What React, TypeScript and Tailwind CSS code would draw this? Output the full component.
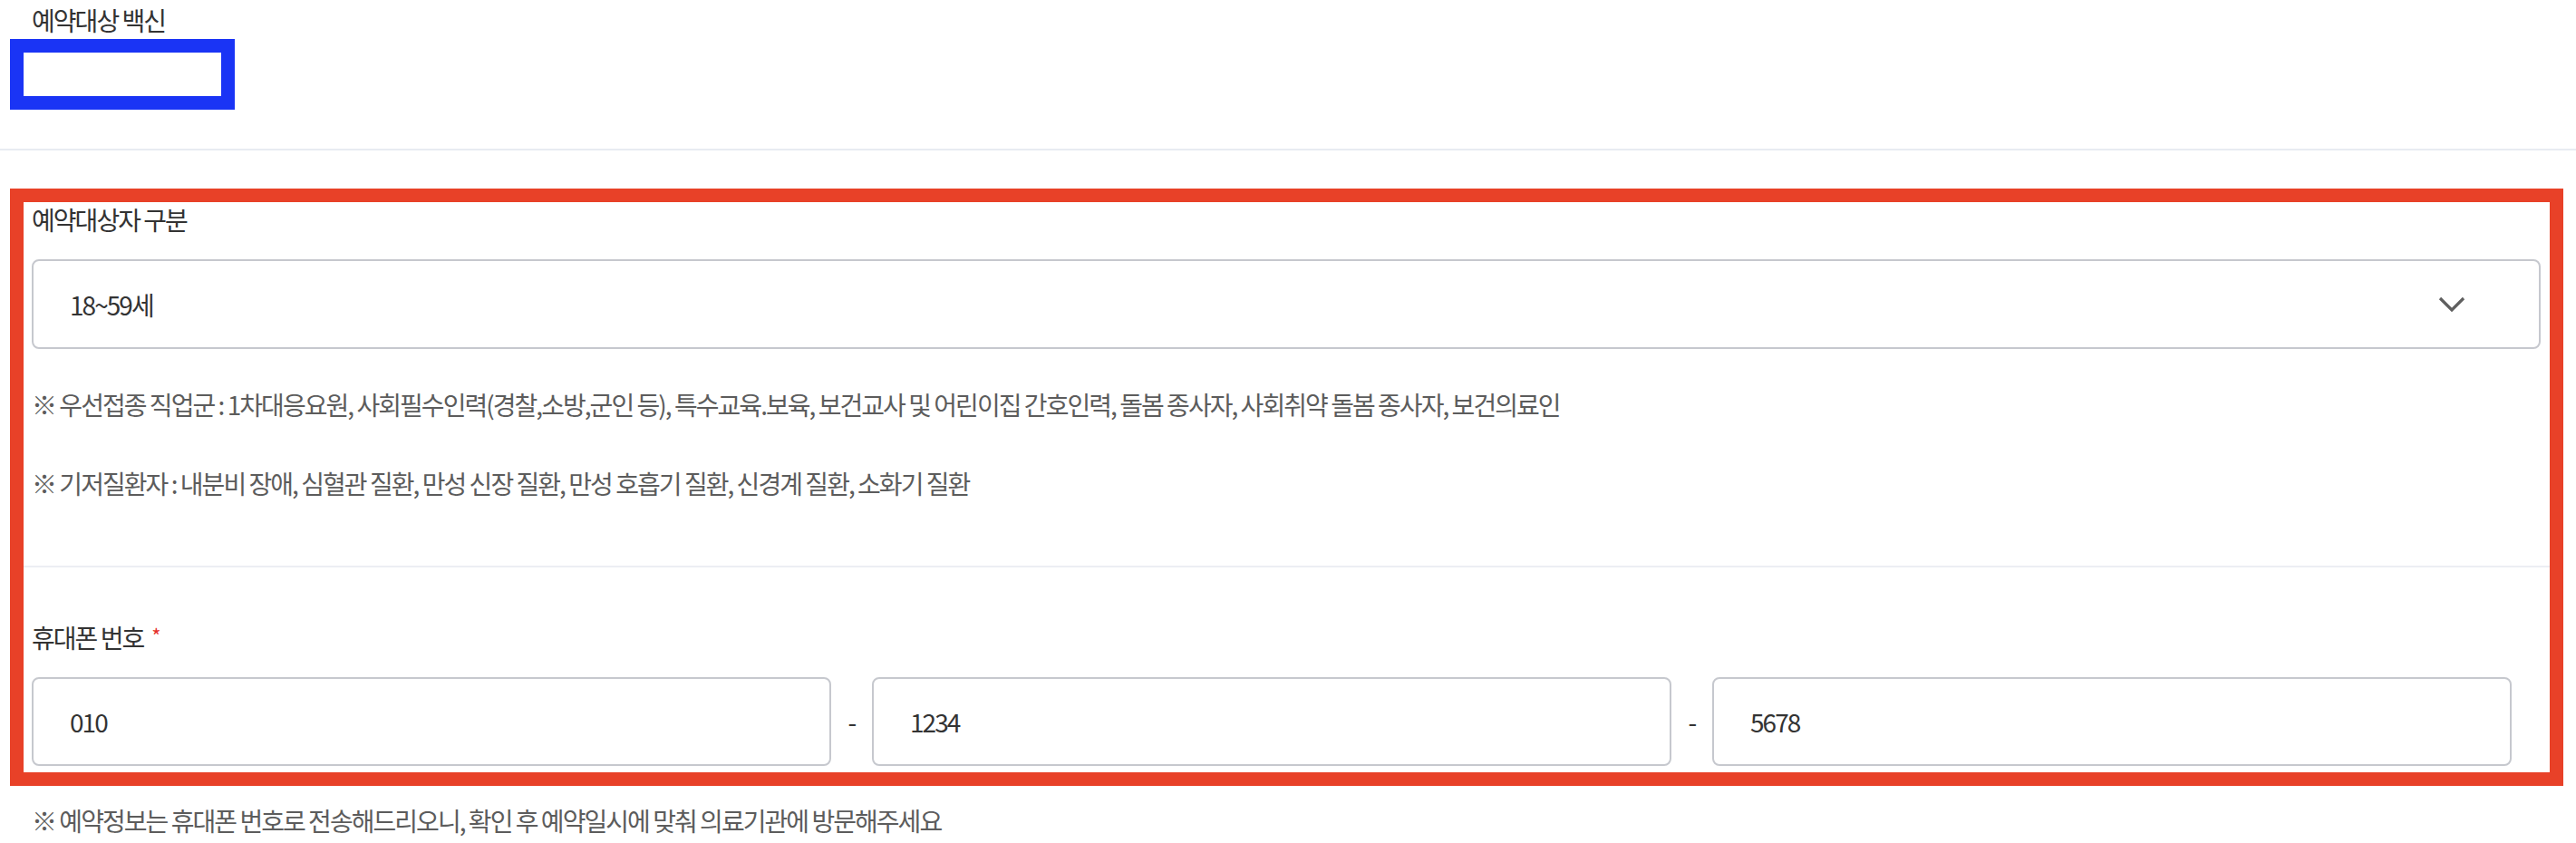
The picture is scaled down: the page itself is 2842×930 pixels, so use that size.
import { Fragment, useState } from "react";

const NOTES = [
  "※ 우선접종 직업군 : 1차대응요원, 사회필수인력(경찰,소방,군인 등), 특수교육.보육, 보건교사 및 어린이집 간호인력, 돌봄 종사자, 사회취약 돌봄 종사자, 보건의료인",
  "※ 기저질환자 : 내분비 장애, 심혈관 질환, 만성 신장 질환, 만성 호흡기 질환, 신경계 질환, 소화기 질환",
];

function ChevronDown() {
  return (
    <svg width="30" height="18" viewBox="0 0 30 18" fill="none">
      <polyline
        points="2,2 15,15 28,2"
        stroke="#5f5f5f"
        strokeWidth="3.2"
        strokeLinecap="butt"
        strokeLinejoin="miter"
      />
    </svg>
  );
}

export default function App() {
  const [phone, setPhone] = useState(["010", "1234", "5678"]);

  function updatePhone(index: number, value: string) {
    const next = [...phone];
    next[index] = value;
    setPhone(next);
  }

  return (
    <main className="min-h-screen w-[2842px] bg-white pt-[8px] font-['Noto_Sans_CJK_KR',sans-serif] text-[28px] leading-[28px] tracking-[-0.07em] text-[#333]">
      <div className="pl-[35px]">예약대상 백신</div>

      <div className="ml-[11px] mt-[7px] h-[78px] w-[248px] border-[15px] border-[#1a34f5] bg-white" />

      <div className="mt-[43px] h-[2px] w-full bg-[#e8ebf2]" />

      <section className="ml-[11px] mr-[14px] mt-[42px] border-[15px] border-[#e84128] pb-[7px]">
        <div className="pl-[9px] pr-[10px] pt-[5px]">
          <div>예약대상자 구분</div>

          <div className="mt-[30px] flex h-[99px] items-center justify-between rounded-[8px] border-2 border-[#c6c8ce] bg-white pl-[40px] pr-[81px]">
            <span>18~59세</span>
            <ChevronDown />
          </div>

          <p className="mt-[47px] text-[#5c5c5c]">{NOTES[0]}</p>
          <p className="mt-[59px] text-[#5c5c5c]">{NOTES[1]}</p>
        </div>

        <div className="mt-[77px] h-[2px] w-full bg-[#eceef3]" />

        <div className="pl-[9px] pr-[42px] pt-[63px]">
          <div className="flex items-start">
            휴대폰 번호
            <span className="ml-[9px] text-[22px] leading-[22px] text-[#e5302b]">*</span>
          </div>

          <div className="mt-[30px] flex items-center">
            {phone.map((value, index) => (
              <Fragment key={index}>
                {index > 0 && (
                  <span className="w-[45px] shrink-0 text-center text-[#333]">-</span>
                )}
                <input
                  type="text"
                  value={value}
                  onChange={(e) => updatePhone(index, e.target.value)}
                  className="h-[98px] min-w-0 flex-1 rounded-[8px] border-2 border-[#c6c8ce] bg-white pl-[40px] text-[#333] outline-none"
                />
              </Fragment>
            ))}
          </div>
        </div>
      </section>

      <p className="mt-[24px] pl-[35px] text-[#5c5c5c]">
        ※ 예약정보는 휴대폰 번호로 전송해드리오니, 확인 후 예약일시에 맞춰 의료기관에 방문해주세요
      </p>
    </main>
  );
}
